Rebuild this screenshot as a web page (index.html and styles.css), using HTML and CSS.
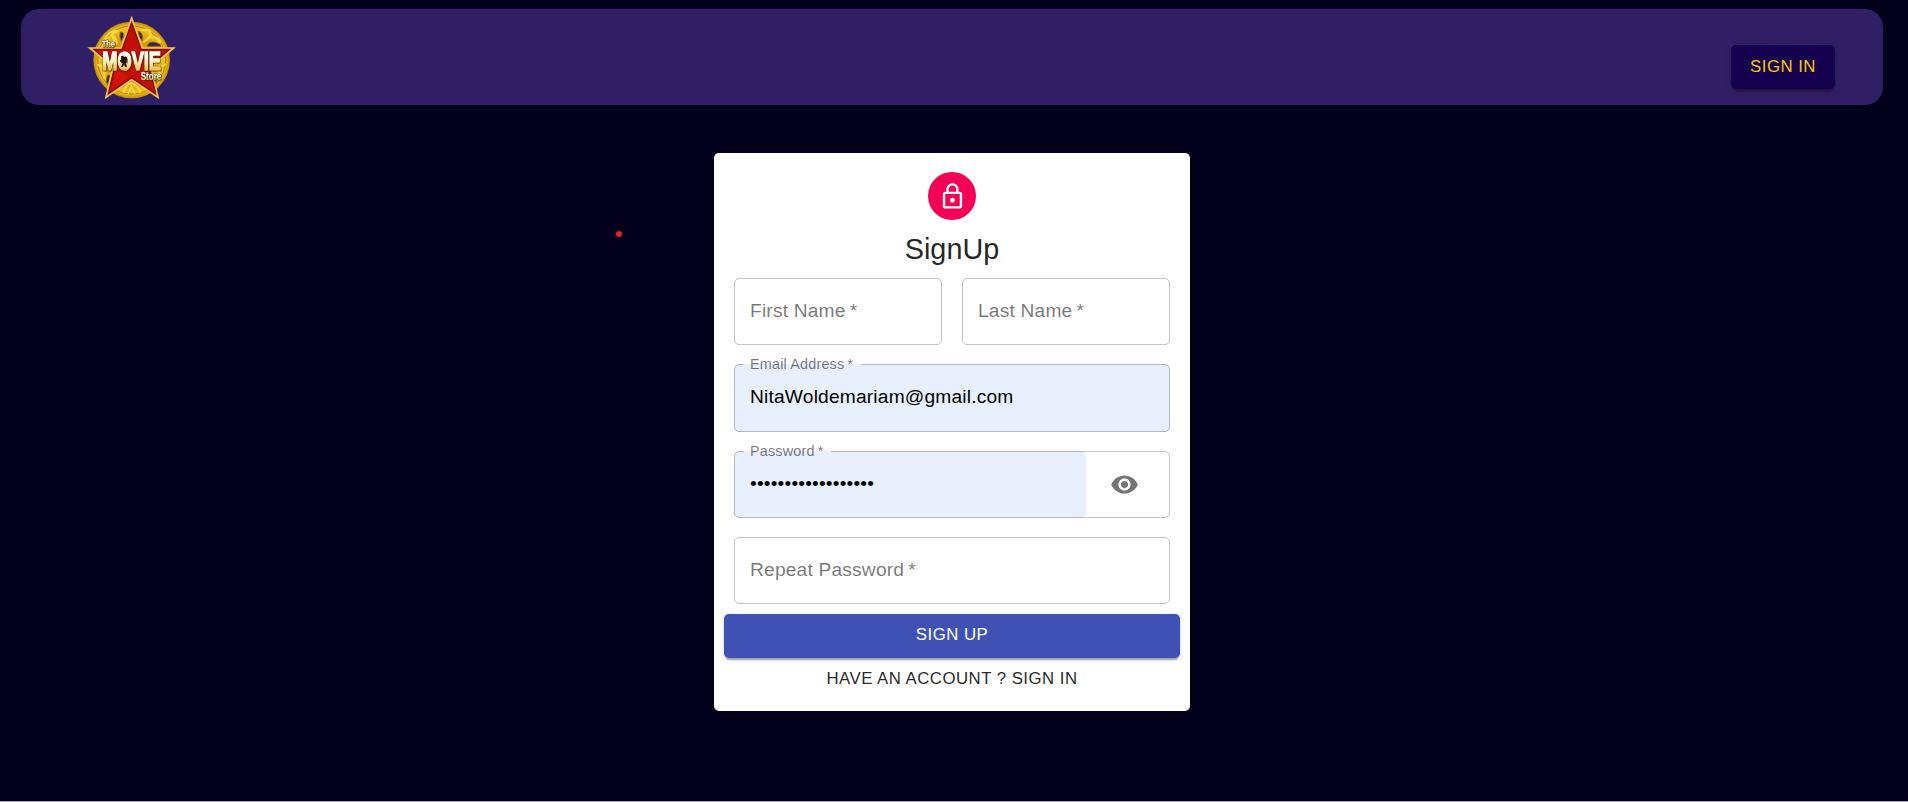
FILE: index.html
```html
<!DOCTYPE html>
<html lang="en">
<head>
<meta charset="utf-8">
<title>The Movie Store</title>
<link rel="stylesheet" href="styles.css">
</head>
<body>
<div class="page">
  <header class="navbar">
    <svg class="logo" viewBox="24 18 264 249">
      <defs>
        <linearGradient id="cream" x1="0" y1="0" x2="0" y2="1">
          <stop offset="0.3" stop-color="#fffdf0"/><stop offset="0.55" stop-color="#ffedb0"/><stop offset="0.8" stop-color="#f0bd40"/>
        </linearGradient>
        <radialGradient id="gold">
          <stop offset="0.6" stop-color="#d39a0c"/><stop offset="0.86" stop-color="#f0c420"/><stop offset="0.93" stop-color="#e0ac12"/><stop offset="1" stop-color="#c08a0a"/>
        </radialGradient>
      </defs>
      <circle cx="155" cy="150" r="115" fill="url(#gold)"/>
      <circle cx="155" cy="150" r="102" fill="none" stroke="#b27f09" stroke-width="3"/>
      <g fill="#30205f" stroke="#94670a" stroke-width="3">
        <path d="M174 64q16 2 13 28q-9-5-13-28zM203 105q6-12 24-8q16 5 16 12h-40z"/>
        <path d="M121 66q13-1 9 16l-6 12q-7-15-3-28zM82 198q5-8 8 2l-6 27q-9-12-2-29zM221 202q13 4 7 19z"/>
      </g>
      <g fill="none" stroke="#f6d649" stroke-width="6" stroke-linecap="round">
        <path d="M75 86q15-28 39-22q-26 5-14 21q8 12-12 18M111 100q-2-18-17-24M186 60q28-5 26 15q-7 13-20 20M207 83q24-5 34 12"/>
        <path d="M54 164q25 7 17 39M255 164q-25 8-16 42M131 246q5-20 22-27q22 8 28 27M145 249l9-20l10 20"/>
      </g>
      <path d="M155 24L187 114H281L213 171L234 262L155 209L78 262L99 171L29 114H123Z" fill="#c40f08" stroke="#f4c74a" stroke-width="5"/>
      <path d="M155 39L183 119H267L207 171L226 250L155 202L86 250L105 171L43 119H127Z" fill="#c40f08" stroke="#6a1205" stroke-width="3"/>
      <path d="M108 180L94 238L147 200Z" fill="#e31a0a" opacity=".5"/>
      <g class="logo-text">
        <text x="65" y="111" font-size="27" textLength="40" lengthAdjust="spacingAndGlyphs" stroke-width="1">The</text>
        <text x="67" y="180" font-size="80" textLength="176" lengthAdjust="spacingAndGlyphs" stroke-width="5">MOVIE</text>
        <text x="182" y="211" font-size="31" textLength="62" lengthAdjust="spacingAndGlyphs" stroke-width="1">Store</text>
      </g>
      <rect x="126" y="137" width="14" height="30" fill="#ffedb0"/>
      <path d="M123 139q7-4 9 2q8-4 9 4l-1 14h-3l4 12h-5l-4-8l-4 8h-5l5-12h-4v-5l-4 2v-7l4 2z" fill="#1b1005"/>
    </svg>
    <button class="btn btn-nav" type="button">Sign In</button>
  </header>

  <main class="card">
    <div class="avatar">
      <svg viewBox="0 0 24 24"><path d="M12 17c1.1 0 2-.9 2-2s-.9-2-2-2-2 .9-2 2 .9 2 2 2zm6-9h-1V6c0-2.760-2.240-5-5-5S7 3.240 7 6v2H6c-1.100 0-2 .9-2 2v10c0 1.100.9 2 2 2h12c1.100 0 2-.9 2-2V10c0-1.100-.9-2-2-2zM8.900 6c0-1.710 1.390-3.100 3.100-3.100s3.100 1.390 3.100 3.100v2H8.900V6zM18 20H6V10h12v10z"/></svg>
    </div>
    <h1 class="title">SignUp</h1>
    <form class="form">
      <div class="fields">
        <label class="field"><span class="placeholder">First Name&thinsp;*</span></label>
        <label class="field"><span class="placeholder">Last Name&thinsp;*</span></label>
        <div class="field wide">
          <input class="filled" type="text" value="NitaWoldemariam@gmail.com" aria-label="Email Address">
          <fieldset class="outline"><legend class="email-label">Email Address&thinsp;*</legend></fieldset>
        </div>
        <div class="field wide">
          <input class="filled" type="password" value="movienight12345678" aria-label="Password">
          <span class="toggle"><svg viewBox="0 0 24 24"><path d="M12 4.500C7 4.500 2.730 7.610 1 12c1.730 4.390 6 7.500 11 7.500s9.270-3.110 11-7.500c-1.730-4.390-6-7.500-11-7.500zM12 17c-2.760 0-5-2.240-5-5s2.240-5 5-5 5 2.240 5 5-2.240 5-5 5zm0-8c-1.660 0-3 1.340-3 3s1.340 3 3 3 3-1.340 3-3-1.340-3-3-3z"/></svg></span>
          <fieldset class="outline"><legend class="password-label">Password&thinsp;*</legend></fieldset>
        </div>
        <label class="field wide"><span class="placeholder">Repeat Password&thinsp;*</span></label>
      </div>
      <button class="btn btn-primary" type="button">Sign Up</button>
      <button class="btn btn-text" type="button">Have an account ? Sign In</button>
    </form>
  </main>
  <span class="dot"></span>
</div>
</body>
</html>
```
FILE: styles.css
```css
* { box-sizing: border-box; }
body {
  margin: 0;
  background: #aaa6b8;
  font-family: "Liberation Sans", Arial, sans-serif;
  font-size: 19.2px;
  letter-spacing: 0.00938em;
}
.page {
  position: relative;
  height: 801px;
  padding: 9px 25px 0 21px;
  background: #02001a;
  overflow: hidden;
}
.navbar {
  display: flex;
  justify-content: space-between;
  height: 96px;
  padding: 7px 48px 0 67px;
  border-radius: 18px;
  background: #311f65;
}
.logo { width: 88px; height: 83px; overflow: visible; }
.logo-text { filter: drop-shadow(0 0 1px #1d0703) drop-shadow(1px 1px 1px #1d0703); }
.logo-text text {
  font-family: "Liberation Sans", Arial, sans-serif;
  font-weight: bold;
  letter-spacing: 0;
  fill: url(#cream);
  stroke: url(#cream);
}
.btn {
  padding: 0;
  border: 0;
  border-radius: 5px;
  font: 16.8px/29.4px "Liberation Sans", Arial, sans-serif;
  letter-spacing: 0.02857em;
  text-transform: uppercase;
}
.btn-nav {
  width: 104px;
  height: 44px;
  margin-top: 29px;
  background: #15004f;
  color: #f5ca08;
}
.btn-nav, .btn-primary {
  box-shadow: 0 4px 1px -2px rgba(0,0,0,.2), 0 2px 2px rgba(0,0,0,.14), 0 1px 6px rgba(0,0,0,.12);
}
.card {
  display: flex;
  flex-direction: column;
  align-items: center;
  width: 476px;
  height: 558px;
  margin: 48px 0 0 693px;
  padding: 19px 10px 0;
  border-radius: 5px;
  background: #fff;
}
.avatar {
  display: grid;
  place-items: center;
  width: 48px;
  height: 48px;
  border-radius: 50%;
  background: #f50057;
}
.avatar svg { width: 29px; height: 29px; fill: #fff; }
.title {
  margin: 10px 0 0;
  font-size: 28.8px;
  font-weight: 400;
  line-height: 38px;
  letter-spacing: 0;
  color: rgba(0,0,0,.87);
}
.form { display: flex; flex-direction: column; width: 456px; }
.fields {
  display: grid;
  grid-template-columns: 208px 208px;
  gap: 19.2px 20px;
  padding: 10px 10px 9.6px;
}
.field {
  position: relative;
  display: flex;
  align-items: center;
  height: 67.2px;
}
label.field {
  padding: 0 15px 1px;
  border: 1px solid rgba(0,0,0,.23);
  border-radius: 5px;
}
.wide { grid-column: span 2; }
.placeholder { color: rgba(0,0,0,.54); }
.filled {
  flex: 1;
  min-width: 0;
  height: 100%;
  padding: 0 16px 1px;
  border: 0;
  border-radius: 5px;
  background: #e8f0fe;
  font: inherit;
  letter-spacing: inherit;
  color: #000;
}
.toggle {
  display: grid;
  place-items: center;
  width: 84px;
  padding-right: 7px;
}
.toggle svg { width: 29px; height: 29px; fill: rgba(0,0,0,.54); }
/* The outline is drawn over the input fill so its legend can notch the border. */
.outline {
  position: absolute;
  inset: -8px 0 0;
  margin: 0;
  padding: 0 9px;
  border: 1px solid rgba(0,0,0,.23);
  border-radius: 5px;
  pointer-events: none;
}
.outline legend {
  height: 17px;
  padding: 0 0 0 6px;
  font-size: 14.4px;
  line-height: 16px;
  color: rgba(0,0,0,.54);
}
.email-label { width: 117px; }
.password-label { width: 87px; }
.btn-primary { height: 44px; padding-bottom: 2px; background: #3f51b5; color: #fff; }
.btn-text { height: 42px; background: none; color: rgba(0,0,0,.87); }
.dot {
  position: absolute;
  left: 616px;
  top: 231px;
  width: 6px;
  height: 6px;
  border-radius: 50%;
  background: #ed1c24;
}
```
